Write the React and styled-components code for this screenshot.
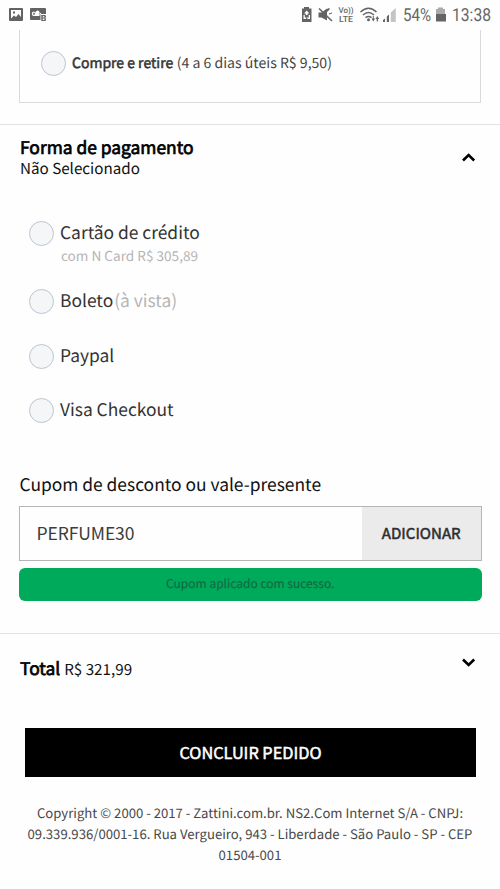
import React from "react";
import styled, { createGlobalStyle } from "styled-components";

const Global = createGlobalStyle`
  * { box-sizing: border-box; }
  body { margin: 0; background: #fefefe; }
  p, h2 { margin: 0; font-weight: 400; }
  button, input { font: inherit; border: 0; padding: 0; margin: 0; border-radius: 0; }
`;

const Screen = styled.main`
  width: 500px;
  height: 889px;
  overflow: hidden;
  display: flex;
  flex-direction: column;
  background: #fefefe;
  color: #111;
  font-family: "Noto Sans CJK SC", "Open Sans", sans-serif;
  text-rendering: geometricPrecision;
  white-space: nowrap;
`;

const StatusBar = styled.header`
  flex: none;
  height: 30px;
  display: flex;
  justify-content: space-between;
  color: #666;
`;

const Label = styled.span`
  font-size: ${(p) => p.$size}px;
  line-height: ${(p) => p.$line || 24}px;
  color: ${(p) => p.$color || "inherit"};
  margin-left: ${(p) => p.$gap || 0}px;
  -webkit-text-stroke: ${(p) => p.$stroke || 0}px currentColor;
`;

const StatusIcons = styled.svg`
  display: block;
  flex: none;
`;

const StatusRight = styled.div`
  display: flex;
  height: 30px;
  font-family: Roboto, sans-serif;
`;

const StatusText = styled.span`
  width: ${(p) => p.$width}px;
  font-size: 18px;
  line-height: 31px;
  transform: scaleX(${(p) => p.$scale});
  transform-origin: left;
`;

const Delivery = styled.section`
  flex: none;
  height: 73px;
  width: 462px;
  margin-left: 19px;
  padding: 21px 0 0 21px;
  border: 1px solid #d9dadb;
  border-top: 0;
  display: flex;
  align-items: flex-start;
`;

const Radio = styled.span`
  flex: none;
  width: 25px;
  height: 25px;
  border: 1.5px solid #bfc4d1;
  border-radius: 50%;
  background: #f4f6f8;
`;

const SectionHead = styled.section`
  flex: none;
  height: ${(p) => p.$height}px;
  margin-top: ${(p) => p.$top}px;
  padding: ${(p) => p.$pad}px 23px 0 20px;
  border-top: ${(p) => p.$rule}px solid #e2e3e3;
  display: flex;
  justify-content: space-between;
`;

const Stack = styled.div`
  display: flex;
  flex-direction: column;
`;

const Chevron = styled.svg`
  display: block;
  margin-top: ${(p) => p.$top}px;
`;

const Options = styled.div`
  flex: none;
  height: 252px;
  padding-left: 29px;
`;

const Option = styled.div`
  height: ${(p) => p.$height}px;
  display: flex;
  align-items: flex-start;
`;

const Coupon = styled.section`
  flex: none;
  height: 161px;
  padding: 0 18.5px 0 19px;
  display: flex;
  flex-direction: column;
`;

const CouponForm = styled.div`
  height: 55px;
  margin-top: 9px;
  border: 1px solid #b4b5b5;
  display: flex;
`;

const CouponInput = styled.input`
  width: 342px;
  padding: 0 0 2px 16.5px;
  background: #fefefe;
  color: #3c3c3c;
  font-size: 17.5px;
  letter-spacing: -0.1px;
  outline: none;
`;

const AddButton = styled.button`
  flex: 1;
  padding-bottom: 3px;
  background: #ebebeb;
  color: #2d2d2d;
`;

const Notice = styled.div`
  height: 33px;
  margin-top: 7px;
  padding-bottom: 1px;
  border-radius: 6px;
  background: #00aa5b;
  display: flex;
  align-items: center;
  justify-content: center;
`;

const Submit = styled.button`
  flex: none;
  width: 451px;
  height: 49px;
  margin-left: 25px;
  padding-bottom: 2px;
  background: #000;
  color: #fff;
`;

const Footer = styled.footer`
  margin-top: 24.5px;
  display: flex;
  flex-direction: column;
  align-items: center;
  color: #484848;
`;

export default function App() {
  return (
    <Screen>
      <Global />
      <StatusBar>
        <StatusIcons width="60" height="30" fill="#636363">
          <path fillRule="evenodd" d="M10 8h12q1 0 1 1v11q0 1-1 1H10q-1 0-1-1V9q0-1 1-1zM11 10v8.500l3-3 2 1.500 2.500-3 2.500 3v-7zM13 11.500h2v2h-2z" />
          <path fillRule="evenodd" d="M31 8h14q1 0 1 1v5h-5.500v6H31q-1 0-1-1V9q0-1 1-1zM34 11.500a2.200 2.200 0 1 0 0 4.400h5.500v-1.200h-.8a2.200 2.200 0 1 0-3-.6h-.2a2.200 2.200 0 0 0-1.500-2.600zM33 13.700a1 1 0 1 0 2 0 1 1 0 0 0-2 0zM39 13.700a1 1 0 1 0 2 0 1 1 0 0 0-2 0z" />
          <path fillRule="evenodd" d="M41.300 15H45q1 0 1 1.500l-.5 1.500.5 1.500Q46 21 45 21h-3.700zM42.700 16.200v1.300h1.700v-1.300zM42.700 18.600v1.300h1.700v-1.300z" />
        </StatusIcons>
        <StatusRight>
          <StatusIcons width="105" height="30" viewBox="298 0 105 30" fill="#646464">
            <path fillRule="evenodd" d="M304 8.500V7h5v1.500h2.500V22H302V8.500zM306.700 10.500l-2.700 3h1.700v1.500h2v-1.500h1.700zM303.500 15v4h2.500v-1.500l2 1.500h2v-4h-1.300v2.500h-3.900v-2.500z" />
            <path d="M318.500 12.500h3l5.500-4v12l-5.500-3h-3zM329 8l1 1-3 3V9z" />
            <path d="m319 8.500 13 12.500" stroke="#646464" strokeWidth="1.600" />
            <path d="m329 14 3-1" stroke="#646464" />
            <text x="338.500" y="13" fontSize="8" fontWeight="500" textLength="15" lengthAdjust="spacingAndGlyphs">Vo))</text>
            <text x="339" y="22" fontSize="8.500" fontWeight="500" textLength="14" lengthAdjust="spacingAndGlyphs">LTE</text>
            <g fill="none" stroke="#646464" strokeWidth="1.500">
              <path d="M360.500 12q8-7.500 16 0M363 15q5.500-5 11 0M365.500 17.700q3-2.500 6 0" />
            </g>
            <circle cx="368.500" cy="19.700" r="1.500" />
            <path d="M371.500 18.500h1.300V16h1v2.500h1.300l-1.800 3zM375.500 19h1.200v2.500h1.200V19h1.300l-1.900-3z" />
            <path d="M383 22v-2l2-1.500V22zM386.800 22v-5.500l2.200-2V22z" />
            <path fill="#c4c4c4" d="M390.800 22v-9.500l5-4.500v14z" />
          </StatusIcons>
          <StatusText $width={33} $scale={0.84}>54%</StatusText>
          <StatusIcons width="16" height="30">
            <path fill="#aaa" d="M0 9h2V7.500h5V9h2v5H0z" />
            <path fill="#646464" d="M0 14h10v7.500H0z" />
          </StatusIcons>
          <StatusText $width={48.5} $scale={0.87}>13:38</StatusText>
        </StatusRight>
      </StatusBar>

      <Delivery>
        <Radio />
        <Label $size={14} $gap={6} $color="#333" $stroke={0.5}>Compre e retire</Label>
        <Label $size={14.1} $gap={3.5} $color="#444">(4 a 6 dias úteis R$ 9,50)</Label>
      </Delivery>

      <SectionHead $top={21} $height={97} $pad={11} $rule={1}>
        <Stack>
          <Label as="h2" $size={17.4} $stroke={0.7} $color="#000">Forma de pagamento</Label>
          <Label $size={15.2} $line={17}>Não Selecionado</Label>
        </Stack>
        <Chevron $top={15} width="17" height="12">
          <path d="M3 9.500 8.600 4l5.600 5.500" fill="none" stroke="#000" strokeWidth="2.600" />
        </Chevron>
      </SectionHead>

      <Options>
        <Option $height={68}>
          <Radio />
          <Stack>
            <Label $size={17.4} $gap={6} $color="#333">Cartão de crédito</Label>
            <Label $size={13.6} $line={20} $gap={7} $color="#b5b5b5">com N Card R$ 305,89</Label>
          </Stack>
        </Option>
        <Option $height={54.5}>
          <Radio />
          <Label $size={17.4} $gap={6} $color="#333">Boleto</Label>
          <Label $size={17.4} $gap={1} $color="#b5b5b5">(à vista)</Label>
        </Option>
        <Option $height={54.5}>
          <Radio />
          <Label $size={17.4} $gap={6} $color="#333">Paypal</Label>
        </Option>
        <Option $height={54.5}>
          <Radio />
          <Label $size={17.4} $gap={6} $color="#333">Visa Checkout</Label>
        </Option>
      </Options>

      <Coupon>
        <Label as="h2" $size={17.4} $gap={0.5}>Cupom de desconto ou vale-presente</Label>
        <CouponForm>
          <CouponInput defaultValue="PERFUME30" aria-label="Cupom" />
          <AddButton><Label $size={15.1} $stroke={0.5}>ADICIONAR</Label></AddButton>
        </CouponForm>
        <Notice><Label $size={12} $color="#146b43" $stroke={0.2}>Cupom aplicado com sucesso.</Label></Notice>
      </Coupon>

      <SectionHead $top={-1} $height={95} $pad={22} $rule={1.5}>
        <div>
          <Label $size={17.4} $stroke={0.7} $color="#000">Total</Label>
          <Label $size={15.2} $gap={4}>R$ 321,99</Label>
        </div>
        <Chevron $top={0} width="17" height="12">
          <path d="M3 3.500 8.600 9l5.600-5.500" fill="none" stroke="#000" strokeWidth="2.600" />
        </Chevron>
      </SectionHead>

      <Submit><Label $size={16.3} $stroke={0.5}>CONCLUIR PEDIDO</Label></Submit>

      <Footer>
        <Label $size={13.15} $line={21.3}>Copyright © 2000 - 2017 - Zattini.com.br. NS2.Com Internet S/A - CNPJ:</Label>
        <Label $size={13.15} $line={21.3}>09.339.936/0001-16. Rua Vergueiro, 943 - Liberdade - São Paulo - SP - CEP</Label>
        <Label $size={13.15} $line={21.3}>01504-001</Label>
      </Footer>
    </Screen>
  );
}
